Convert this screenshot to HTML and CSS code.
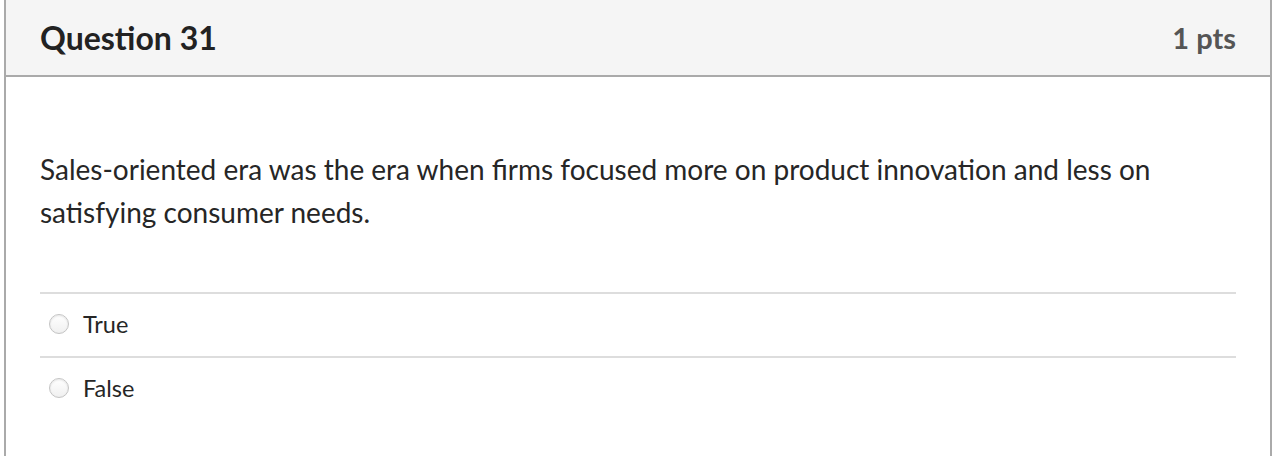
FILE: index.html
```html
<!DOCTYPE html>
<html>
<head>
<meta charset="utf-8">
<link rel="stylesheet" href="styles.css">
</head>
<body>
<div class="question">
  <div class="q-header">
    <span class="q-title">Question 31</span>
    <span class="q-points">1 pts</span>
  </div>
  <div class="q-body">
    <p class="q-text">Sales-oriented era was the era when firms focused more on product innovation and less on satisfying consumer needs.</p>
    <div class="answers">
      <label class="answer"><span class="radio"></span><span class="answer-text">True</span></label>
      <label class="answer"><span class="radio"></span><span class="answer-text">False</span></label>
    </div>
  </div>
</div>
</body>
</html>
```
FILE: styles.css
```css
html, body {
  margin: 0;
  padding: 0;
  background: #ffffff;
}
body {
  font-family: "Lato", "Open Sans", sans-serif;
  color: #2d3b45;
  height: 456px;
  overflow: hidden;
}
.question {
  margin-left: 4px;
  width: 1264px;
  border-left: 2px solid #aaaaaa;
  border-right: 2px solid #aaaaaa;
  min-height: 456px;
}
.q-header {
  display: flex;
  justify-content: space-between;
  align-items: center;
  box-sizing: border-box;
  height: 77px;
  padding: 0 34px 1px;
  background: #f5f5f5;
  border-bottom: 2px solid #aaaaaa;
}
.q-title {
  font-weight: 700;
  font-size: 32px;
  color: #222222;
}
.q-points {
  font-weight: 700;
  font-size: 29px;
  color: #555555;
}
.q-body {
  padding: 71px 34px 0;
}
.q-text {
  margin: 0;
  font-size: 28px;
  line-height: 43px;
  color: #262626;
}
.answers {
  margin-top: 58px;
}
.answer {
  display: flex;
  align-items: center;
  box-sizing: content-box;
  height: 59px;
  padding-bottom: 3px;
  padding-left: 9px;
  border-top: 2px solid #dddddd;
}
.radio {
  width: 18px;
  height: 18px;
  border-radius: 50%;
  border: 1px solid #c4c4c4;
  background: linear-gradient(#ffffff, #f0f0f0);
  box-shadow: inset 0 1px 2px rgba(0,0,0,0.1);
  flex: none;
}
.answer-text {
  margin-left: 14px;
  font-size: 23.5px;
  color: #262626;
}
```
